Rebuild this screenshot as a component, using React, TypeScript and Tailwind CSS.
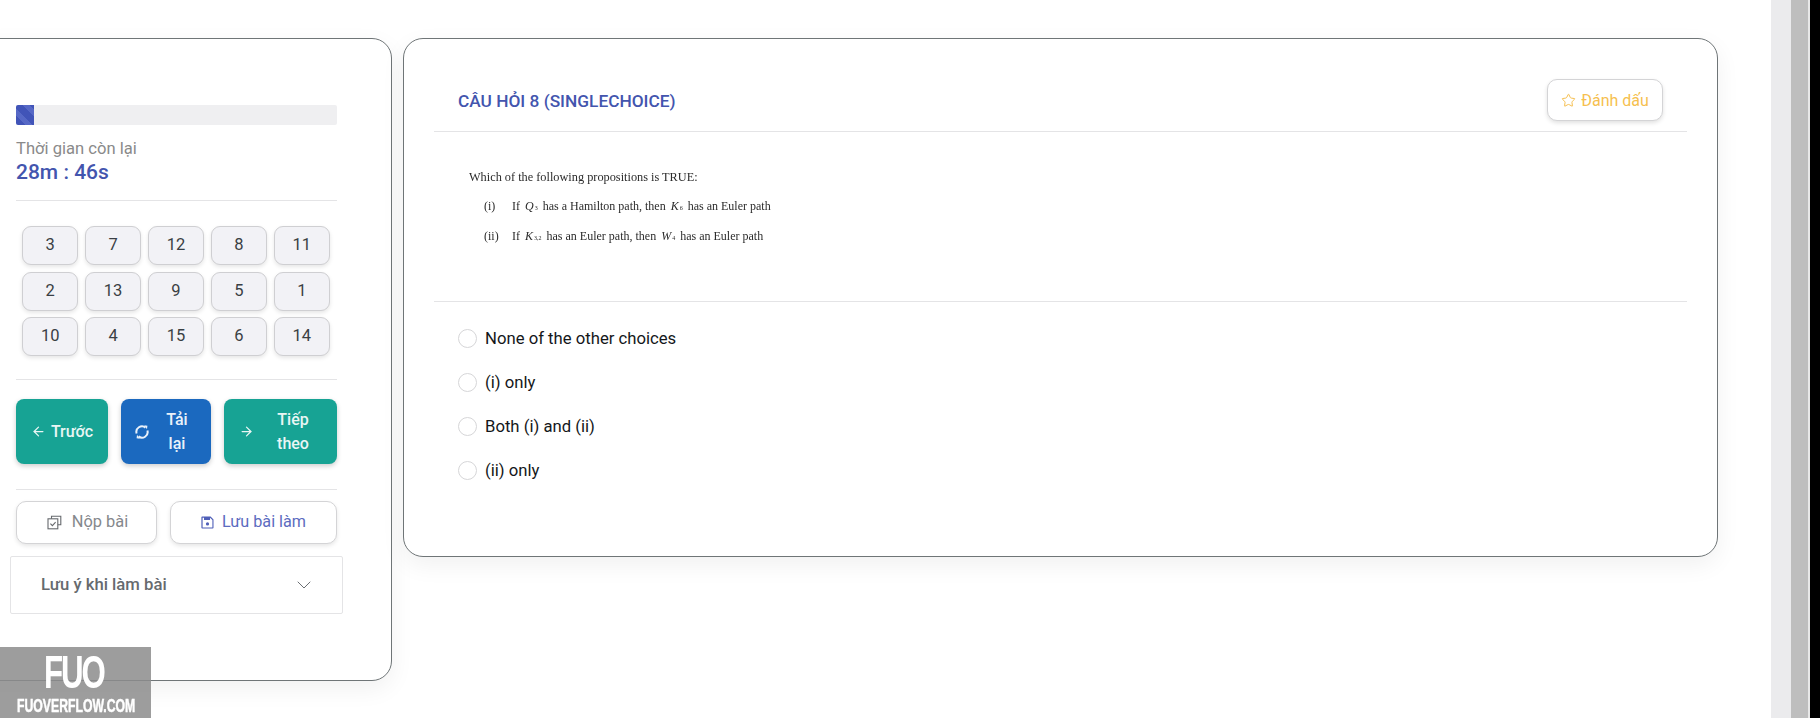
import { ArrowLeft, ArrowRight, ChevronDown, Star } from "lucide-react";

const numbers = [3, 7, 12, 8, 11, 2, 13, 9, 5, 1, 10, 4, 15, 6, 14];
const choices = ["None of the other choices", "(i) only", "Both (i) and (ii)", "(ii) only"];

const Math1 = ({ name, sub }: { name: string; sub: string }) => (
  <span className="mx-[2px] italic">
    {name}
    <span className="ml-px text-[6px] not-italic">{sub}</span>
  </span>
);

const SyncIcon = () => (
  <svg width="16" height="16" viewBox="0 0 16 16" fill="none" stroke="currentColor" strokeWidth="2" className="shrink-0">
    <path d="M2.6 9.5A5.6 5.6 0 0 1 11.5 3.6" />
    <path d="M13.4 6.5A5.6 5.6 0 0 1 4.5 12.4" />
    <path d="M10.2 1.2l3.2 0.6-0.4 3.4z" fill="currentColor" stroke="none" />
    <path d="M5.8 14.8l-3.2-0.6 0.4-3.4z" fill="currentColor" stroke="none" />
  </svg>
);

const SubmitIcon = () => (
  <svg width="15" height="15" viewBox="0 0 15 15" fill="none" stroke="currentColor" strokeWidth="1.1" className="shrink-0 text-[#66696d]">
    <path d="M4.5 3.8V1.2h9.3v8.6h-3" />
    <rect x="1" y="3.8" width="9.8" height="10" />
    <path d="M3.4 8.6l2 2 3.2-3.4" />
  </svg>
);

const SaveIcon = () => (
  <svg width="13" height="13" viewBox="0 0 13 13" className="shrink-0 text-[#4f5fb8]">
    <path
      fill="currentColor"
      fillRule="evenodd"
      d="M1.2 0.5h8.4l2.9 2.9v8.4a0.8 0.8 0 0 1-0.8 0.8H1.2a0.8 0.8 0 0 1-0.8-0.8V1.3a0.8 0.8 0 0 1 0.8-0.8zM1.6 1.7v9.9h9.8V4L9 1.7v2.2H3V1.7zM6.5 6.3a1.6 1.6 0 1 0 0 3.2 1.6 1.6 0 0 0 0-3.2z"
    />
  </svg>
);

const App = () => {
  return (
    <div className="relative flex h-[718px] w-[1820px] overflow-hidden bg-white font-['Roboto',sans-serif]">
      <main className="flex flex-1 items-start gap-[11px] pt-[38px]">
        {/* Left panel */}
        <aside className="-ml-[30px] h-[643px] w-[422px] shrink-0 rounded-[20px] border border-[#6f7577] bg-white pl-[45px] pr-[54px] pt-[66px] shadow-[0_8px_24px_rgba(0,0,0,0.06)]">
          <div className="h-[20px] w-[321px] rounded-[2px] bg-[#efeff1]">
            <div className="h-full w-[18px] rounded-l-[2px] bg-[repeating-linear-gradient(45deg,#4154b8_0,#4154b8_7px,#5668c6_7px,#5668c6_12px)]" />
          </div>
          <div className="mt-[13px] text-[16.6px] leading-[22px] text-[#8a8a8a]">Thời gian còn lại</div>
          <div className="text-[21px] font-medium leading-[24px] text-[#4355ae]">28m : 46s</div>
          <div className="mt-[16px] h-px w-[321px] bg-[#e4e4e6]" />

          <div className="ml-[6px] mt-[25px] grid w-[308px] grid-cols-5 gap-x-[6.5px] gap-y-[6.5px]">
            {numbers.map((n) => (
              <button
                key={n}
                className="flex h-[39px] items-center justify-center rounded-[9px] border border-[#cfcfd2] bg-[#f2f2f6] text-[16.5px] text-[#3a3f44] shadow-[0_2px_4px_rgba(0,0,0,0.1)]"
              >
                {n}
              </button>
            ))}
          </div>
          <div className="mt-[23px] h-px w-[321px] bg-[#e4e4e6]" />

          <div className="mt-[19px] flex h-[65px] w-[321px] gap-[13px]">
            <button className="flex w-[92px] items-center justify-center gap-[5px] rounded-[8px] bg-[#17a394] text-base font-medium text-[#e9f6f4] shadow-[0_2px_5px_rgba(0,0,0,0.2)]">
              <ArrowLeft size={15} strokeWidth={2} />
              Trước
            </button>
            <button className="flex w-[90px] items-center rounded-[8px] bg-[#1b69bf] pl-[13px] text-base font-medium leading-[24px] text-[#e9f1fa] shadow-[0_2px_5px_rgba(0,0,0,0.2)]">
              <SyncIcon />
              <span className="w-[54px] text-center">
                Tải
                <br />
                lại
              </span>
            </button>
            <button className="flex w-[113px] items-center rounded-[8px] bg-[#17a394] pl-[15px] text-base font-medium leading-[24px] text-[#e9f6f4] shadow-[0_2px_5px_rgba(0,0,0,0.2)]">
              <ArrowRight size={15} strokeWidth={2} />
              <span className="w-[74px] pl-[4px] text-center">
                Tiếp
                <br />
                theo
              </span>
            </button>
          </div>
          <div className="mt-[25px] h-px w-[321px] bg-[#e4e4e6]" />

          <div className="mt-[11px] flex h-[43px] w-[321px] gap-[13px]">
            <button className="flex w-[141px] items-center justify-center gap-[10px] rounded-[10px] border border-[#d4d4d6] bg-white pl-[2px] text-[16.4px] text-[#85888c] shadow-[0_2px_4px_rgba(0,0,0,0.1)]">
              <SubmitIcon />
              Nộp bài
            </button>
            <button className="flex w-[167px] items-center justify-center gap-[8px] rounded-[10px] border border-[#d4d4d6] bg-white text-[16.2px] text-[#5c6bc0] shadow-[0_2px_4px_rgba(0,0,0,0.1)]">
              <SaveIcon />
              Lưu bài làm
            </button>
          </div>

          <div className="-ml-[6px] mt-[12px] flex h-[58px] w-[333px] items-center justify-between rounded-[2px] border border-[#e4e4e6] pl-[30px] pr-[26px]">
            <span className="text-[16.7px] font-medium text-[#666a6e]">Lưu ý khi làm bài</span>
            <ChevronDown size={24} strokeWidth={1} className="text-[#6b6f73]" />
          </div>
        </aside>

        {/* Question panel */}
        <section className="h-[519px] w-[1315px] shrink-0 rounded-[20px] border border-[#6f7577] bg-white px-[30px] shadow-[0_8px_24px_rgba(0,0,0,0.06)]">
          <div className="flex h-[93px] items-end justify-between border-b border-[#e4e4e6] pb-[10px] pl-[24px] pr-[24px]">
            <h2 className="mb-[6px] text-[17.3px] font-medium text-[#4355ae]">CÂU HỎI 8 (SINGLECHOICE)</h2>
            <button className="flex h-[42px] w-[116px] items-center justify-center gap-[5px] rounded-[10px] border border-[#d4d4d6] bg-white pt-[1px] text-base text-[#f6bf4f] shadow-[0_2px_4px_rgba(0,0,0,0.12)]">
              <Star size={15} strokeWidth={1.6} />
              Đánh dấu
            </button>
          </div>

          <div className="h-[170px] border-b border-[#e4e4e6] pl-[35px] pt-[38px] font-['Liberation_Serif',serif] text-[12px] leading-[14px] text-[#2b2b2b] blur-[0.3px]">
            <div className="text-[12.3px]">Which of the following propositions is TRUE:</div>
            <div className="mt-[15px] flex pl-[15px]">
              <span className="w-[28px]">(i)</span>
              <span>
                If <Math1 name="Q" sub="3" /> has a Hamilton path, then <Math1 name="K" sub="6" /> has an Euler path
              </span>
            </div>
            <div className="mt-[14px] flex pl-[15px]">
              <span className="w-[28px]">(ii)</span>
              <span>
                If <Math1 name="K" sub="3,2" /> has an Euler path, then <Math1 name="W" sub="4" /> has an Euler path
              </span>
            </div>
          </div>

          <div className="flex flex-col gap-[19px] pl-[24px] pt-[24px]">
            {choices.map((c) => (
              <label key={c} className="flex h-[25px] items-center gap-[8px] text-[16.7px] text-[#14171a]">
                <span className="h-[19px] w-[19px] rounded-full border border-[#d6d6d8] bg-white" />
                {c}
              </label>
            ))}
          </div>
        </section>
      </main>

      {/* Scrollbar strips */}
      <div className="w-[20px] shrink-0 bg-[#ebebed]" />
      <div className="w-[17px] shrink-0 bg-[#bebebe]" />
      <div className="w-[2px] shrink-0 bg-[#e8e8e8]" />
      <div className="w-[10px] shrink-0 bg-black" />

      {/* Watermark */}
      <div className="absolute bottom-0 left-0 h-[71px] w-[151px] overflow-hidden bg-[#8c8c8c]/85 text-white">
        <div className="ml-[44px] w-[100px] origin-left scale-x-[0.68] font-['Liberation_Sans',sans-serif] text-[46px] font-bold leading-[50px] tracking-[-3px]">
          FUO
        </div>
        <div className="ml-[17px] w-[180px] origin-left scale-x-[0.68] whitespace-nowrap font-['Liberation_Sans',sans-serif] text-[18px] font-bold leading-[18px] [-webkit-text-stroke:0.5px_white]">
          FUOVERFLOW.COM
        </div>
      </div>
    </div>
  );
};

export default App;
